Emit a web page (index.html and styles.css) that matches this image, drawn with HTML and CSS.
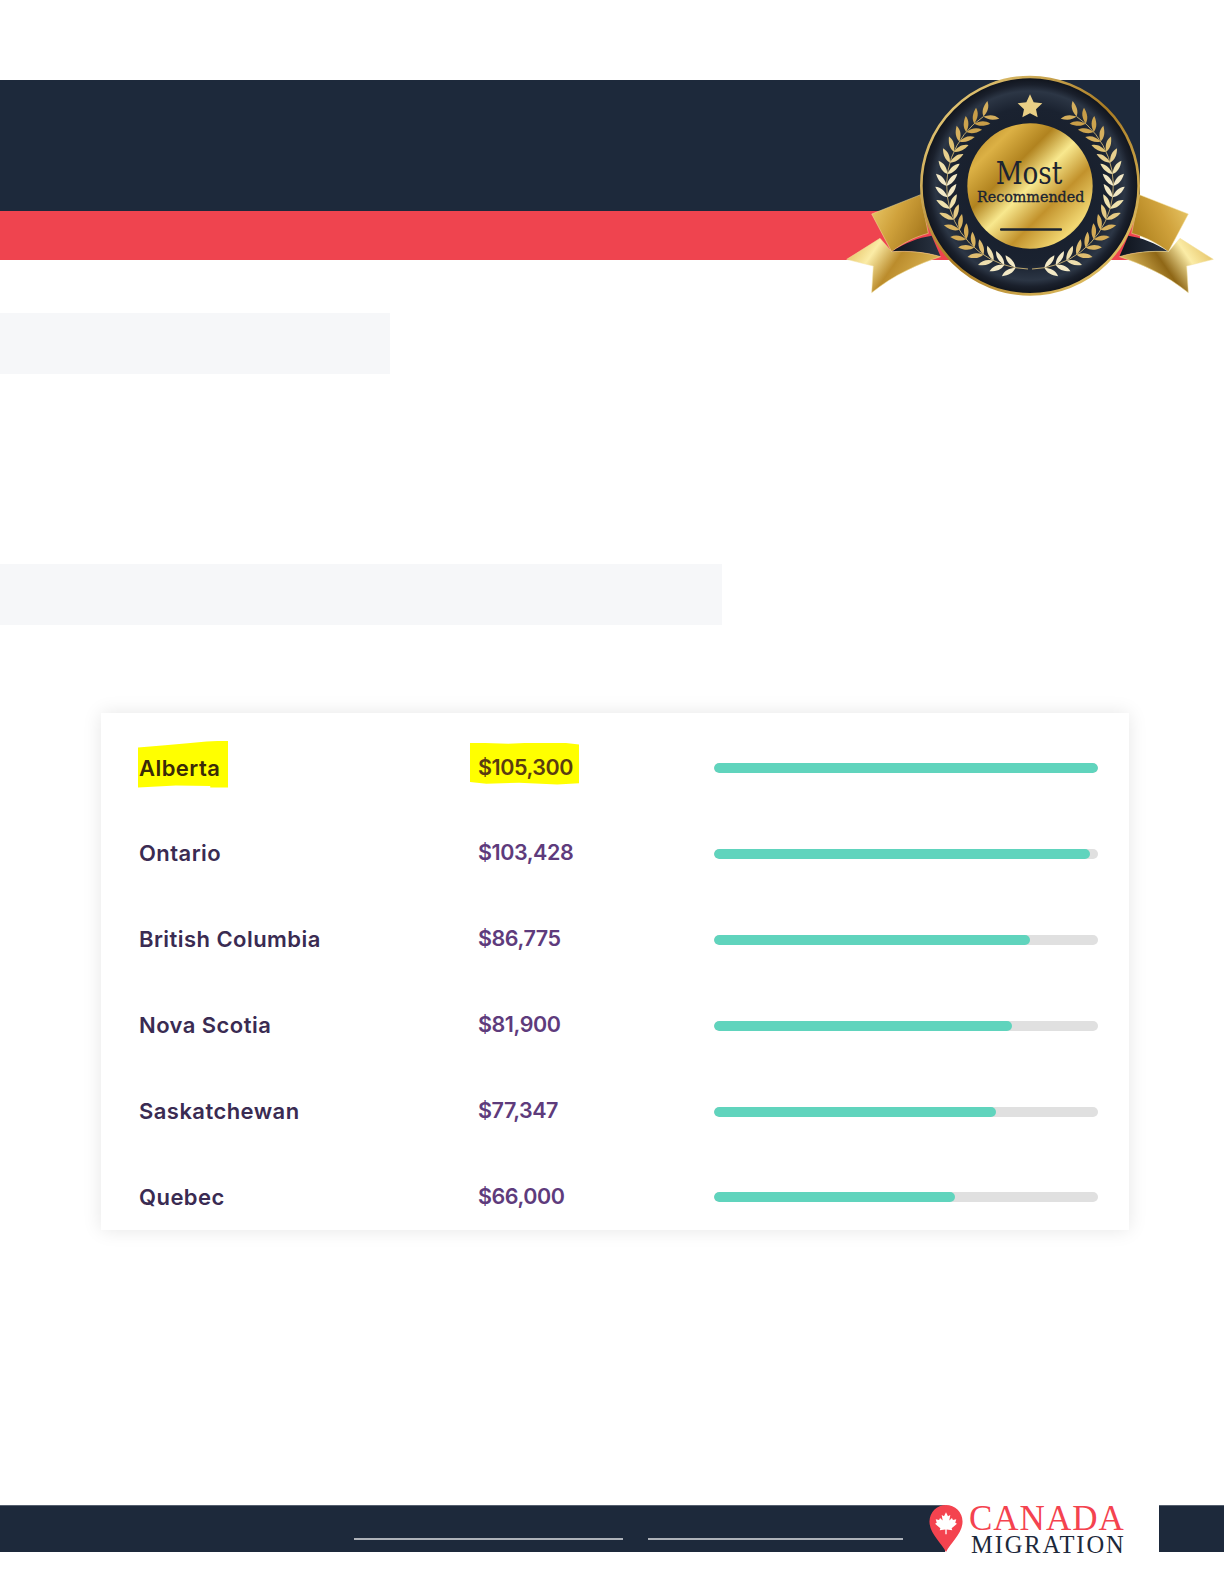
FILE: index.html
```html
<!DOCTYPE html>
<html lang="en">
<head>
<meta charset="utf-8">
<title>Average income by province</title>
<link rel="stylesheet" href="styles.css">
</head>
<body>
<div class="page">
  <header class="hero">
    <div class="hero-dark"></div>
    <div class="hero-red"></div>
    <svg class="badge" viewBox="0 0 1182 750" role="img" aria-label="Most Recommended badge">
      <defs>
        <linearGradient id="gold" x1="0" y1="0" x2="1" y2="1">
          <stop offset="0" stop-color="#a97a1f"/>
          <stop offset=".2" stop-color="#dcb145"/>
          <stop offset=".36" stop-color="#b1831f"/>
          <stop offset=".5" stop-color="#f8e88e"/>
          <stop offset=".66" stop-color="#c2922c"/>
          <stop offset=".84" stop-color="#f2d873"/>
          <stop offset="1" stop-color="#a5761a"/>
        </linearGradient>
        <linearGradient id="ribbonA" x1="0" y1="0" x2="1" y2=".5">
          <stop offset="0" stop-color="#eccd6e"/>
          <stop offset=".5" stop-color="#d0a23c"/>
          <stop offset="1" stop-color="#a97b1f"/>
        </linearGradient>
        <linearGradient id="ribbonB" x1="0" y1="0" x2="1" y2=".4">
          <stop offset="0" stop-color="#dcb24d"/>
          <stop offset=".33" stop-color="#fbeca6"/>
          <stop offset=".6" stop-color="#bb8c2c"/>
          <stop offset="1" stop-color="#dcb655"/>
        </linearGradient>
        <linearGradient id="ribbonC" x1="1" y1="0" x2="0" y2=".5">
          <stop offset="0" stop-color="#eccd6e"/>
          <stop offset=".5" stop-color="#d0a23c"/>
          <stop offset="1" stop-color="#b0831f"/>
        </linearGradient>
        <linearGradient id="ribbonD" x1="1" y1="0" x2="0" y2=".4">
          <stop offset="0" stop-color="#dcb24d"/>
          <stop offset=".35" stop-color="#fbeca6"/>
          <stop offset=".62" stop-color="#8f6716"/>
          <stop offset="1" stop-color="#e4c163"/>
        </linearGradient>
        <linearGradient id="rim" x1="0" y1="0" x2="1" y2="1">
          <stop offset="0" stop-color="#f3dc8e"/>
          <stop offset=".5" stop-color="#a97b22"/>
          <stop offset="1" stop-color="#f0d377"/>
        </linearGradient>
        <radialGradient id="disc" cx=".5" cy=".5" r=".5">
          <stop offset="0" stop-color="#151b27"/>
          <stop offset=".72" stop-color="#1a2230"/>
          <stop offset=".87" stop-color="#2c3645"/>
          <stop offset=".93" stop-color="#1a202c"/>
          <stop offset="1" stop-color="#0f131b"/>
        </radialGradient>
        <linearGradient id="fold" x1="0" y1="0" x2="1" y2="0">
          <stop offset="0" stop-color="#0e131c"/>
          <stop offset="1" stop-color="#2a3443"/>
        </linearGradient>
        <g id="pair">
          <path d="M0-250C-4-266-16-276-36-282C-32-264-18-254 0-250Z"/>
          <path d="M0-250C-4-236-16-224-36-218C-32-236-18-246 0-250Z"/>
        </g>
        <g id="branch">
          <path d="M6 250A250 250 0 0 0 139.8-207.3" fill="none" stroke="#dcc07a" stroke-width="2.5"/>
          <use href="#pair" transform="rotate(170)" fill="#f3e9c6"/>
          <use href="#pair" transform="rotate(162)" fill="#f3e9c6"/>
          <use href="#pair" transform="rotate(154)" fill="#eedfae"/>
          <use href="#pair" transform="rotate(146)" fill="#dfbd70"/>
          <use href="#pair" transform="rotate(138)" fill="#d9b35f"/>
          <use href="#pair" transform="rotate(130)" fill="#d4aa54"/>
          <use href="#pair" transform="rotate(122)" fill="#d9b35f"/>
          <use href="#pair" transform="rotate(114)" fill="#e6cb85"/>
          <use href="#pair" transform="rotate(106)" fill="#f0e2ae"/>
          <use href="#pair" transform="rotate(98)" fill="#f3e9c6"/>
          <use href="#pair" transform="rotate(90)" fill="#f3e9c6"/>
          <use href="#pair" transform="rotate(82)" fill="#f0e2ae"/>
          <use href="#pair" transform="rotate(74)" fill="#e8d08e"/>
          <use href="#pair" transform="rotate(66)" fill="#e0c272"/>
          <use href="#pair" transform="rotate(58)" fill="#d6b05e"/>
          <use href="#pair" transform="rotate(50)" fill="#cda44e"/>
          <use href="#pair" transform="rotate(42)" fill="#c99e48"/>
          <use href="#pair" transform="rotate(34)" fill="#d4ae5c"/>
        </g>
      </defs>
      <path class="ribbon-edge" d="M125 462L272 404L295 520C250 532 215 552 185 575Z" fill="url(#ribbonA)"/>
      <path d="M185 575C225 548 265 533 305 527L332 590C285 576 235 572 185 575Z" fill="url(#fold)"/>
      <path class="ribbon-edge" d="M50 598L150 535L185 575C235 572 285 576 332 590C268 610 190 645 125 698L130 618Z" fill="url(#ribbonB)"/>
      <path class="ribbon-edge" d="M1075 462L928 404L905 520C950 532 985 552 1015 575Z" fill="url(#ribbonC)"/>
      <path d="M1015 575C975 548 935 533 895 527L868 590C915 576 965 572 1015 575Z" fill="url(#fold)"/>
      <path class="ribbon-edge" d="M1150 598L1050 535L1015 575C965 572 915 576 868 590C932 610 1010 645 1075 698L1070 618Z" fill="url(#ribbonD)"/>
      <circle cx="600" cy="377" r="326" fill="url(#disc)" stroke="url(#rim)" stroke-width="8"/>
      <circle cx="600" cy="378" r="188" fill="url(#gold)"/>
      <use href="#branch" transform="translate(600 377)"/>
      <use href="#branch" transform="translate(600 377) scale(-1 1)"/>
      <path d="M600 103L611 127L637 130L618 148L623 172L600 160L577 172L582 148L563 130L589 127Z" fill="#e9cf85"/>
      <text class="badge-most" x="497" y="373" textLength="200" lengthAdjust="spacingAndGlyphs">Most</text>
      <text class="badge-rec" x="441" y="426" textLength="322" lengthAdjust="spacingAndGlyphs">Recommended</text>
      <rect x="510" y="505" width="186" height="7" rx="3" fill="#1c2431"/>
    </svg>
  </header>

  <div class="blank blank-short"></div>
  <div class="blank blank-long"></div>

  <section class="card">
    <div class="row">
      <span class="name"><span class="mark mark-name">Alberta</span></span>
      <span class="amount"><span class="mark mark-amount">$105,300</span></span>
      <div class="track"><div class="fill" style="width:100%"></div></div>
    </div>
    <div class="row">
      <span class="name">Ontario</span>
      <span class="amount">$103,428</span>
      <div class="track"><div class="fill" style="width:97.9%"></div></div>
    </div>
    <div class="row">
      <span class="name">British Columbia</span>
      <span class="amount">$86,775</span>
      <div class="track"><div class="fill" style="width:82.3%"></div></div>
    </div>
    <div class="row">
      <span class="name">Nova Scotia</span>
      <span class="amount">$81,900</span>
      <div class="track"><div class="fill" style="width:77.6%"></div></div>
    </div>
    <div class="row">
      <span class="name">Saskatchewan</span>
      <span class="amount">$77,347</span>
      <div class="track"><div class="fill" style="width:73.4%"></div></div>
    </div>
    <div class="row">
      <span class="name">Quebec</span>
      <span class="amount">$66,000</span>
      <div class="track"><div class="fill" style="width:62.8%"></div></div>
    </div>
  </section>

  <footer class="footer">
    <div class="footer-band">
      <span class="rule rule-a"></span>
      <span class="rule rule-b"></span>
    </div>
    <div class="logo">
      <svg class="pin" viewBox="0 0 100 142" aria-hidden="true">
        <path d="M50 142C36 114 0 86 0 50A50 50 0 0 1 100 50C100 86 64 114 50 142Z" fill="#f4434f"/>
        <path d="M50 22L56 34L63 30L60 47L68 39L71 45L81 43L78 54L83 57L67 70L69 76L52 74L52 88L48 88L48 74L31 76L33 70L17 57L22 54L19 43L29 45L32 39L40 47L37 30L44 34Z" fill="#fff"/>
      </svg>
      <div class="logo-text">
        <span class="logo-top">CANADA</span>
        <span class="logo-bottom">MIGRATION</span>
      </div>
    </div>
    <div class="footer-end"></div>
  </footer>
</div>
</body>
</html>
```

FILE: styles.css
```css
* { box-sizing: border-box; }
html, body { margin: 0; padding: 0; background: #fff; }

.page {
  width: 1224px;
  height: 1584px;
  overflow: hidden;
  padding-top: 80px;
  font-family: "Inter", "Liberation Sans", sans-serif;
}

.hero { position: relative; width: 1140px; }
.hero-dark { height: 131px; background: #1d293b; }
.hero-red { height: 49px; background: #ef444f; }
.badge {
  position: absolute;
  left: 830px;
  top: -20px;
  width: 394px;
  height: 250px;
}
.ribbon-edge { stroke: #f2e09f; stroke-width: 1.5; }
.badge-most {
  font-family: "DejaVu Serif Condensed", "DejaVu Serif", serif;
  font-size: 96px;
  fill: #1c2431;
}
.badge-rec {
  font-family: "DejaVu Serif Condensed", "DejaVu Serif", serif;
  font-size: 46px;
  fill: #1c2431;
  stroke: #1c2431;
  stroke-width: 1;
}

.blank { height: 61px; background: #f6f7f9; }
.blank-short { width: 390px; margin-top: 53px; }
.blank-long { width: 722px; margin-top: 190px; }

.card {
  width: 1028px;
  height: 517px;
  margin: 88px 0 0 101px;
  padding: 35px 31px 0 38px;
  background: #fff;
  box-shadow: 0 0 18px rgba(0, 0, 0, .1);
  display: flex;
  flex-direction: column;
  gap: 45.9px;
}
.row {
  height: 40px;
  display: grid;
  grid-template-columns: 339px 236px 384px;
  align-items: center;
  font-size: 22px;
  font-weight: 600;
}
.name { color: #3a2b52; letter-spacing: .45px; padding-bottom: 1px; }
.amount { color: #5e3b7c; font-size: 21.5px; letter-spacing: -.45px; padding-bottom: 3px; }

.mark { position: relative; z-index: 0; }
.mark::before {
  content: "";
  position: absolute;
  z-index: -1;
  background: #ff0;
}
.mark-name { color: #3a2a08; }
.mark-name::before {
  left: -1px; right: -8px; top: -14px; bottom: -7px;
  clip-path: polygon(0 15%, 30% 10%, 55% 6%, 76% 2%, 100% 0, 100% 100%, 80% 100%, 80% 97%, 42% 96%, 0 100%);
}
.mark-amount { color: #5a3c10; }
.mark-amount::before {
  left: -8px; right: -6px; top: -11px; bottom: -5px;
  clip-path: polygon(0 0, 35% 3%, 60% 0, 88% 1%, 100% 5%, 100% 97%, 80% 100%, 45% 96%, 15% 98%, 0 94%);
}

.track { height: 10px; border-radius: 5px; background: #e0e0e0; overflow: hidden; }
.fill { height: 100%; border-radius: 5px; background: #60d4bd; }

.footer {
  display: flex;
  height: 47px;
  margin-top: 275px;
}
.footer-band {
  width: 945px;
  display: flex;
  align-items: flex-end;
  padding: 0 0 12px 354px;
  gap: 25px;
  background: #1d293b;
  border-top: 1px solid #555f6e;
}
.rule { height: 2px; background: #aeb2b9; }
.rule-a { width: 269px; }
.rule-b { width: 255px; }

.logo {
  width: 230px;
  margin-left: -16px;
  display: flex;
  gap: 6px;
}
.pin { width: 34px; height: 47px; flex: none; }
.logo-text {
  display: flex;
  flex-direction: column;
  font-family: "Liberation Serif", serif;
}
.logo-top {
  height: 27px;
  font-size: 35px;
  line-height: 27px;
  letter-spacing: 1px;
  color: #f4434f;
}
.logo-bottom {
  height: 20px;
  margin-left: 2px;
  font-size: 24.5px;
  line-height: 26px;
  letter-spacing: 1.9px;
  color: #1d293b;
}
.footer-end { flex: 1; background: #1d293b; border-top: 1px solid #555f6e; }
```
